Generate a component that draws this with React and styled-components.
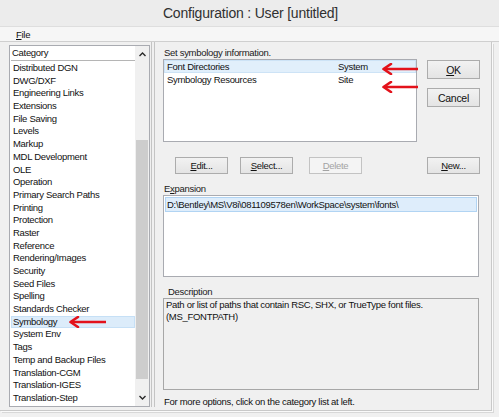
import React from 'react';
import styled, { createGlobalStyle } from 'styled-components';

const categories = [
  'Distributed DGN',
  'DWG/DXF',
  'Engineering Links',
  'Extensions',
  'File Saving',
  'Levels',
  'Markup',
  'MDL Development',
  'OLE',
  'Operation',
  'Primary Search Paths',
  'Printing',
  'Protection',
  'Raster',
  'Reference',
  'Rendering/Images',
  'Security',
  'Seed Files',
  'Spelling',
  'Standards Checker',
  'Symbology',
  'System Env',
  'Tags',
  'Temp and Backup Files',
  'Translation-CGM',
  'Translation-IGES',
  'Translation-Step',
];

const symbologyRows = [
  { name: 'Font Directories', level: 'System', selected: true, arrow: 9 },
  { name: 'Symbology Resources', level: 'Site', arrow: 27 },
];

const RedArrow = ({ width = 36 }) => (
  <svg width={width} height="12" viewBox={`0 0 ${width} 12`}>
    <path d={`M${width} 6 H3`} stroke="#e3121b" strokeWidth="2.6" fill="none" />
    <path d="M10 1 L2.5 6 L10 11" stroke="#e3121b" strokeWidth="2.6" fill="none" strokeLinecap="round" strokeLinejoin="round" />
  </svg>
);

const Chevron = ({ up }) => (
  <svg width="9" height="6" viewBox="0 0 9 6">
    <path d={up ? 'M1.5 5 L4.5 2 L7.5 5' : 'M1.5 1 L4.5 4 L7.5 1'} stroke="#2a2a2a" strokeWidth="1.4" fill="none" />
  </svg>
);

const App = () => {
  return (
    <>
      <GlobalStyle />
      <Window>
        <TitleBar>Configuration : User [untitled]</TitleBar>
        <MenuBar>
          <span>
            <u>F</u>ile
          </span>
        </MenuBar>
        <Body>
          <CategoryBox>
            <CategoryItems>
              <CategoryHeader>Category</CategoryHeader>
              {categories.map((c) => (
                <CategoryRow key={c} selected={c === 'Symbology'}>
                  {c}
                  {c === 'Symbology' && (
                    <ArrowMark style={{ left: 57, top: 0 }}>
                      <RedArrow width={38} />
                    </ArrowMark>
                  )}
                </CategoryRow>
              ))}
            </CategoryItems>
            <Scrollbar>
              <ScrollButton>
                <Chevron up />
              </ScrollButton>
              <ScrollTrack>
                <Thumb />
              </ScrollTrack>
              <ScrollButton>
                <Chevron />
              </ScrollButton>
            </Scrollbar>
          </CategoryBox>
          <Splitter />
          <Pane>
            <Label>Set symbology information.</Label>
            <TopRow>
              <ListBox>
                {symbologyRows.map((r) => (
                  <ListRow key={r.name} selected={r.selected}>
                    <NameCell>{r.name}</NameCell>
                    <span>{r.level}</span>
                  </ListRow>
                ))}
                {symbologyRows.map((r) => (
                  <ArrowMark key={r.name} style={{ left: 217, top: r.arrow - 6 }}>
                    <RedArrow width={37} />
                  </ArrowMark>
                ))}
              </ListBox>
              <SideButtons>
                <Button tall>
                  <u>O</u>K
                </Button>
                <Button tall>Cancel</Button>
              </SideButtons>
            </TopRow>
            <ButtonRow>
              <Button>
                <u>E</u>dit...
              </Button>
              <Button>
                <u>S</u>elect...
              </Button>
              <Button disabled>
                <u>D</u>elete
              </Button>
              <Spacer />
              <Button>
                <u>N</u>ew...
              </Button>
            </ButtonRow>
            <Label spaced>
              E<u>x</u>pansion
            </Label>
            <ExpansionBox>
              <ExpansionRow>D:\Bentley\MS\V8i\081109578en\WorkSpace\system\fonts\</ExpansionRow>
            </ExpansionBox>
            <Label spaced indent>
              Description
            </Label>
            <DescriptionBox>
              Path or list of paths that contain RSC, SHX, or TrueType font files.
              <br />
              (MS_FONTPATH)
            </DescriptionBox>
            <Footer>For more options, click on the category list at left.</Footer>
          </Pane>
        </Body>
      </Window>
    </>
  );
};

export default App;

const GlobalStyle = createGlobalStyle`
  body {
    margin: 0;
    background: #f0f0f0;
    font-family: "Liberation Sans", Arial, sans-serif;
  }
  u {
    text-decoration-thickness: 1px;
    text-underline-offset: 1px;
  }
`;

const Window = styled.div`
  width: 499px;
  height: 417px;
  background: #f0f0f0;
  display: flex;
  flex-direction: column;
  overflow: hidden;
  font-size: 9.5px;
  letter-spacing: -0.3px;
  color: #111;
`;

const TitleBar = styled.div`
  height: 27px;
  flex-shrink: 0;
  display: flex;
  align-items: center;
  justify-content: center;
  padding-left: 2px;
  background: #ececec;
  border-bottom: 1px solid #dedede;
  box-sizing: border-box;
  font-size: 14px;
  letter-spacing: -0.2px;
  color: #303030;
`;

const MenuBar = styled.div`
  height: 15px;
  flex-shrink: 0;
  display: flex;
  align-items: center;
  padding-left: 16px;
  background: #f6f6f6;
  border-bottom: 1px solid #cfcfcf;
  box-sizing: border-box;
`;

const Body = styled.div`
  width: 492px;
  height: 369px;
  display: flex;
  padding: 3px 0 0 9px;
  box-sizing: border-box;
  border-right: 1px solid #c9c9c9;
  border-bottom: 1px solid #c9c9c9;
  box-shadow: 1px 1px 0 #fafafa, 2px 2px 0 #d8d8d8;
`;

const CategoryBox = styled.div`
  width: 141px;
  height: 362px;
  box-sizing: border-box;
  border: 1px solid #a9abb1;
  background: #fff;
  display: flex;
`;

const CategoryItems = styled.div`
  flex: 1;
  min-width: 0;
  padding-left: 1px;
  overflow: hidden;
`;

const CategoryHeader = styled.div`
  height: 15px;
  line-height: 14px;
  padding-left: 1px;
  margin-bottom: 1px;
  border-bottom: 1px solid #b5b5b5;
  box-sizing: border-box;
`;

const CategoryRow = styled.div`
  position: relative;
  height: 12.7px;
  line-height: 12.7px;
  padding-left: 2px;
  box-sizing: border-box;
  white-space: nowrap;
  background: ${(p) => (p.selected ? '#dcecfa' : 'transparent')};
  box-shadow: ${(p) => (p.selected ? 'inset 0 0 0 1px #c6e0f6' : 'none')};
`;

const ArrowMark = styled.span`
  position: absolute;
  display: flex;
  line-height: 0;
`;

const Scrollbar = styled.div`
  width: 14px;
  flex-shrink: 0;
  display: flex;
  flex-direction: column;
  background: #f0f0f0;
`;

const ScrollButton = styled.div`
  height: 16px;
  flex-shrink: 0;
  display: flex;
  align-items: center;
  justify-content: center;
`;

const ScrollTrack = styled.div`
  flex: 1;
  display: flex;
  flex-direction: column;
  padding: 78px 1px 11px;
`;

const Thumb = styled.div`
  flex: 1;
  background: #cdcdcd;
`;

const Splitter = styled.div`
  width: 2px;
  height: 365px;
  margin: -3px 0 0 1px;
  border-left: 1px solid #c4c4c4;
  border-right: 1px solid #c4c4c4;
`;

const Pane = styled.div`
  flex: 1;
  display: flex;
  flex-direction: column;
  padding: 1px 11px 0 8px;
`;

const Label = styled.div`
  height: 13px;
  line-height: 13px;
  margin-top: ${(p) => (p.spaced ? '8px' : '0')};
  padding-left: ${(p) => (p.indent ? '5px' : '1px')};
  color: #1a1a1a;
`;

const TopRow = styled.div`
  display: flex;
`;

const ListBox = styled.div`
  position: relative;
  width: 254px;
  height: 83px;
  box-sizing: border-box;
  border: 1px solid #a9abb1;
  background: #fff;
`;

const ListRow = styled.div`
  display: flex;
  height: 13px;
  line-height: 13px;
  padding-left: 3px;
  background: ${(p) => (p.selected ? '#e1effb' : 'transparent')};
  box-shadow: ${(p) => (p.selected ? 'inset 0 0 0 1px #cde3f6' : 'none')};
`;

const NameCell = styled.span`
  width: 171px;
`;

const SideButtons = styled.div`
  display: flex;
  flex-direction: column;
  gap: 9px;
  margin-left: 10px;
  padding-top: 1px;
`;

const Button = styled.button`
  width: 53px;
  height: ${(p) => (p.tall ? '19px' : '17px')};
  padding: 0;
  box-sizing: border-box;
  font: inherit;
  font-size: ${(p) => (p.tall ? '10.5px' : '9.5px')};
  letter-spacing: -0.3px;
  color: ${(p) => (p.disabled ? '#a3a3a3' : '#111')};
  border: 1px solid ${(p) => (p.disabled ? '#c3c3c3' : '#acacac')};
  background: ${(p) => (p.disabled ? '#f4f4f4' : 'linear-gradient(#f2f2f2, #e4e4e4)')};
`;

const ButtonRow = styled.div`
  display: flex;
  gap: 12px;
  margin-top: 15px;
  padding-left: 12px;
  & > button:nth-child(3) {
    margin-left: 4px;
  }
`;

const Spacer = styled.div`
  flex: 1;
`;

const ExpansionBox = styled.div`
  height: 82px;
  width: 316px;
  box-sizing: border-box;
  border: 1px solid #a9abb1;
  background: #fff;
  padding: 1px;
`;

const ExpansionRow = styled.div`
  height: 15px;
  padding-left: 1px;
  box-sizing: border-box;
  background: #deedfb;
  border: 1px solid #b1d4f3;
  line-height: 13px;
  white-space: nowrap;
`;

const DescriptionBox = styled.div`
  height: 92px;
  width: 316px;
  box-sizing: border-box;
  border: 1px solid #a7a7a7;
  padding: 0 2px;
  line-height: 12px;
  background: #f0f0f0;
`;

const Footer = styled.div`
  margin-top: 6px;
  line-height: 12px;
  padding-left: 1px;
`;
